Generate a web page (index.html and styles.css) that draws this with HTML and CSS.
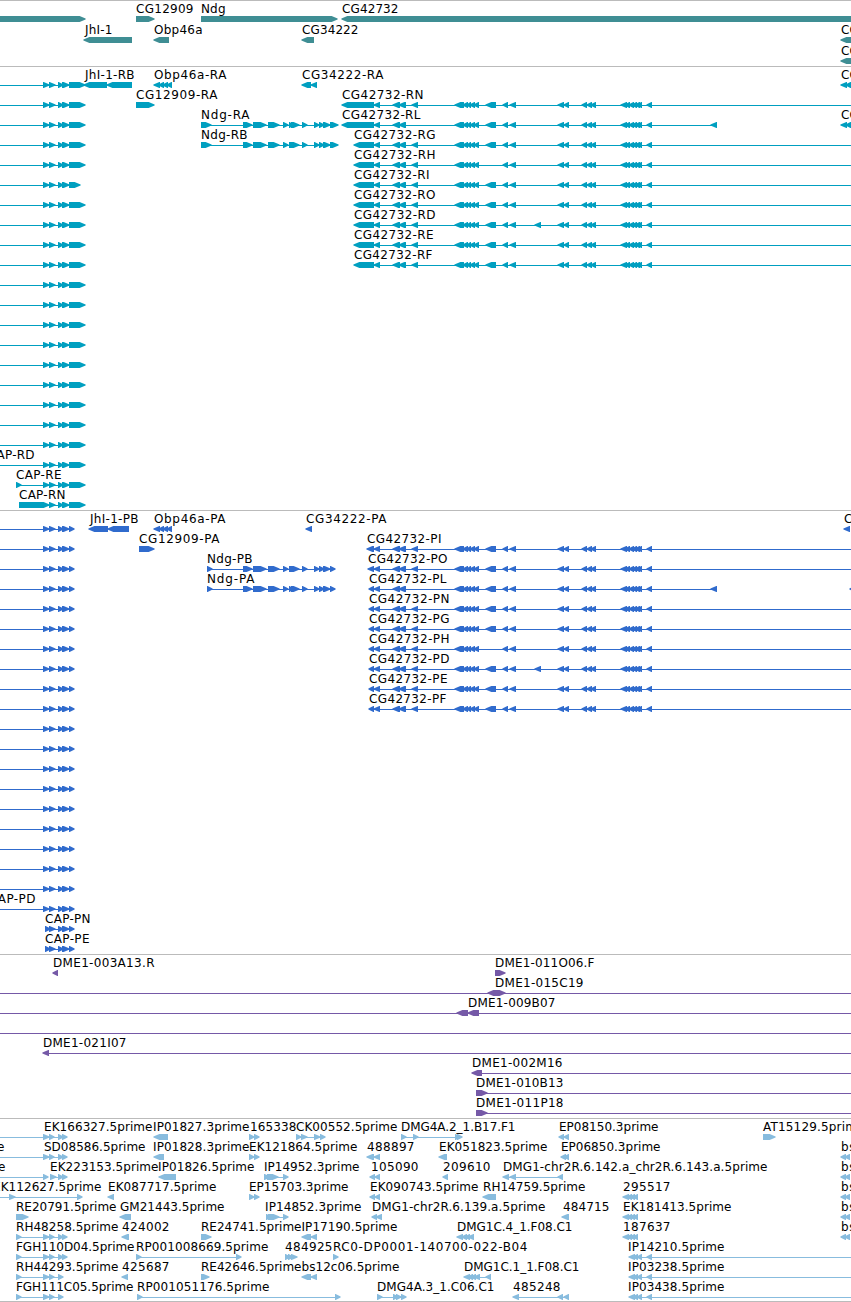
FILE: index.html
```html
<!DOCTYPE html>
<html lang="en">
<head>
<meta charset="utf-8">
<title>Genome tracks</title>
<link rel="stylesheet" href="styles.css">
</head>
<body>
<main class="browser">
<section class="track track-gene"></section>
<section class="track track-transcript"></section>
<section class="track track-protein"></section>
<section class="track track-bac"></section>
<section class="track track-est"></section>
</main>
<script src="tracks.js"></script>
</body>
</html>
```
FILE: styles.css
```css
body {
  margin: 0;
  background: #fff;
  overflow: hidden;
}
.browser {
  display: flex;
  flex-direction: column;
  width: 851px;
  height: 1302px;
  overflow: hidden;
}
.track {
  box-sizing: border-box;
  flex: none;
  border-top: 1px solid #bbb;
  padding-bottom: 3px;
}
.track-gene { color: #3f8e94; height: 66px; }
.track-transcript { color: #009fc0; }
.track-protein { color: #306bcd; }
.track-bac { color: #7559a7; }
.track-est { color: #88bcde; height: 184px; border-bottom: 1px solid #bbb; padding-bottom: 0; }
.row {
  display: block;
  width: 851px;
  height: 20px;
  overflow: visible;
}
.track-gene .row { height: 21px; }
.feature {
  fill: currentColor;
}
.label {
  fill: #000;
  font-family: "DejaVu Sans", sans-serif;
  font-size: 12px;
}
```
FILE: tracks.js
```js
const NS = "http://www.w3.org/2000/svg";

// Feature: [direction, "start-end start-end ...", label, label start, label end, line start, line end]
function add(svg, tag, attrs) {
  const el = document.createElementNS(NS, tag);
  for (const k in attrs) el.setAttribute(k, attrs[k]);
  svg.appendChild(el);
  return el;
}

function arrow(svg, dir, s, e) {
  const w = e - s;
  const h = Math.min(w, 6);
  const tip = 0.6;
  let pts;
  if (dir === "R") {
    pts = [[s, 15], [e - h + 0.6, 15], [e + tip, 17.6], [e + tip, 18.4], [e - h + 0.6, 21], [s, 21]];
  } else {
    pts = [[e, 15], [s + h - 0.6, 15], [s - tip, 17.6], [s - tip, 18.4], [s + h - 0.6, 21], [e, 21]];
  }
  add(svg, "polygon", { class: "feature", points: pts.map(p => p.join(",")).join(" ") });
}

function draw(selector, rows) {
  const track = document.querySelector(selector);
  rows.forEach(row => {
    const svg = document.createElementNS(NS, "svg");
    svg.setAttribute("class", "row");
    row.forEach(([dir, exons, label, lx, le, from, to]) => {
      const parts = exons ? exons.split(" ").map(x => x.split("~").map(Number)) : [];
      if (from !== undefined) {
        add(svg, "rect", { class: "feature", x: from, y: 18, width: to - from, height: 1 });
      }
      parts.forEach(p => arrow(svg, dir, p[0], p[1]));
      if (label) {
        const t = add(svg, "text", { class: "label", x: lx, y: 12 });
        if (le !== undefined && le !== null) t.setAttribute("textLength", le - lx + 0.5);
        t.textContent = label;
      }
    });
    track.appendChild(svg);
  });
}

const N = null;

draw(".track-gene", [
  [["R", "-10~85"], ["R", "136~154", "CG12909", 136, 193], ["R", "201~337", "Ndg", 201, 225], ["L", "342~860", "CG42732", 342, 398]],
  [["L", "84~132", "JhI-1", 85, 112], ["L", "154~169", "Obp46a", 154, 202], ["L", "302~314", "CG34222", 302, 358], ["L", "841~860", "CG", 841]],
  [["L", "841~860", "CG", 841]]
]);

const HEAD = "374~380 393~400 399~406";
const MID = "455~463 459~464 463~468 467~471 470~475 474~479";
const BIG = "486~496";
const TAIL = "503~508 510~516 558~564 564~569 582~587 587~592 591~596 621~627 625~630 629~634 632~637 635~640 637~642 647~652";

function longGene(first, label, lx, le, opt = {}) {
  const ex = [first, HEAD, opt.noFour ? "" : "412~418", MID, opt.noBig ? "" : BIG, opt.extra || "", TAIL, opt.end || ""];
  const start = Number(first.split("~")[0]);
  return ["L", ex.filter(Boolean).join(" "), label, lx, le, start + 3, opt.end ? 717 : 851];
}

const NDG = "243~252 253~266 268~279 283~288";
const NDG_SPLIT = "289~293 291~299";
const NDG_END = "302~307 314~319 319~324 323~330";
const CAP = "43~49 49~55 58~63 62~69";

const transcripts = Array.from({ length: 20 }, (_, i) =>
  [["R", CAP + (i === 5 ? " 69~80" : " 69~85"), N, N, N, 0, 76]]);
transcripts[0].push(
  ["L", "84~107 107~132", "JhI-1-RB", 85, 134],
  ["L", "154~160 159~164 163~168 167~172", "Obp46a-RA", 154, 226],
  ["L", "302~311 311~317", "CG34222-RA", 302, 383],
  ["L", "841~847 846~851", "CG", 841]);
transcripts[1].push(["R", "136~154", "CG12909-RA", 136, 217], longGene("342~374", "CG42732-RN", 342, 423));
transcripts[2].push(
  ["R", `201~211 ${NDG} ${NDG_SPLIT} ${NDG_END} 330~338`, "Ndg-RA", 201, 249, 201, 335],
  longGene("342~374", "CG42732-RL", 342, 420, { noFour: true, end: "711~717" }),
  ["L", "841~847 846~851", "CG", 841]);
transcripts[3].push(
  ["R", `201~211 ${NDG} 289~299 ${NDG_END} 330~338`, "Ndg-RB", 201, 247, 201, 335],
  longGene("354~374", "CG42732-RG", 354, 435));
transcripts[4].push(longGene("354~374", "CG42732-RH", 354, 435, { noBig: true }));
transcripts[5].push(longGene("354~374", "CG42732-RI", 354, 429));
transcripts[6].push(longGene("354~374", "CG42732-RO", 354, 435));
transcripts[7].push(longGene("354~374", "CG42732-RD", 354, 435, { extra: "535~541" }));
transcripts[8].push(longGene("354~374", "CG42732-RE", 354, 433));
transcripts[9].push(longGene("354~374", "CG42732-RF", 354, 432));
transcripts[19].push(["R", "", "CAP-RD", -12, 34]);
transcripts.push([["R", "16~21 " + CAP + " 69~85", "CAP-RE", 16, 61, 16, 76]]);
transcripts.push([["R", "19~49 49~55 58~63 62~69 69~85", "CAP-RN", 19, 65, 40, 76]]);
draw(".track-transcript", transcripts);

const proteins = Array.from({ length: 20 }, () => [["R", CAP + " 69~74", N, N, N, 0, 72]]);
proteins[0].push(
  ["L", "89~108 108~129", "JhI-1-PB", 90, 138],
  ["L", "154~160 159~164 163~168 167~172", "Obp46a-PA", 154, 225],
  ["L", "306~312", "CG34222-PA", 306, 386],
  ["L", "844~850", "C", 844]);
proteins[1].push(["R", "139~154", "CG12909-PA", 139, 219], longGene("367~374", "CG42732-PI", 367, 441));
proteins[2].push(
  ["R", `207~212 ${NDG} 289~299 ${NDG_END} 330~335`, "Ndg-PB", 207, 252, 207, 334],
  longGene("368~374", "CG42732-PO", 368, 447));
proteins[3].push(
  ["R", `207~212 ${NDG} ${NDG_SPLIT} ${NDG_END} 330~335`, "Ndg-PA", 207, 254, 207, 334],
  longGene("369~374", "CG42732-PL", 369, 446, { noFour: true, end: "711~717" }),
  ["L", "850~855"]);
proteins[4].push(longGene("369~374", "CG42732-PN", 369, 449));
proteins[5].push(longGene("369~374", "CG42732-PG", 369, 449));
proteins[6].push(longGene("369~374", "CG42732-PH", 369, 449, { noBig: true }));
proteins[7].push(longGene("369~374", "CG42732-PD", 369, 449, { extra: "535~541" }));
proteins[8].push(longGene("369~374", "CG42732-PE", 369, 447));
proteins[9].push(longGene("369~374", "CG42732-PF", 369, 446));
proteins[19].push(["R", "", "CAP-PD", -11, 35]);
proteins.push([["R", "45~50 49~55 58~63 62~69 69~74", "CAP-PN", 45, 90, 45, 72]]);
proteins.push([["R", "45~50 49~55 58~63 62~69 69~74", "CAP-PE", 45, 89, 45, 72]]);
draw(".track-protein", proteins);

draw(".track-bac", [
  [["L", "53~58", "DME1-003A13.R", 53, 154], ["R", "495~505", "DME1-011O06.F", 495, 594]],
  [["L", "488~497", N, N, N, 0, 851], ["R", "495~505", "DME1-015C19", 495, 583]],
  [["L", "457~468 468~479", "DME1-009B07", 468, 555, 0, 851]],
  [["L", "", N, N, N, 0, 851]],
  [["L", "43~49", "DME1-021I07", 43, 126, 46, 851]],
  [["L", "472~482", "DME1-002M16", 472, 562, 476, 851]],
  [["R", "476~487", "DME1-010B13", 476, 563, 480, 851]],
  [["R", "476~487", "DME1-011P18", 476, 563, 480, 851]]
]);

const FOUR = "43~49 49~54 58~63 62~67";
const THREE = "16~21 43~49 49~54 58~63";
const PAIR = "249~254 254~259";
const CLUSTER = "623~629 627~632 630~635 633~638";
const IP = "629~635 633~638 637~642 647~652";
const BS = ["L", "841~846 845~850", "bs", 841, 855];

draw(".track-est", [
  [["R", FOUR, "EK166327.5prime", 44, 152, 0, 65], ["L", "154~168", "IP01827.3prime", 153, 249],
   ["R", PAIR, "165338", 250, 296], ["R", "296~301 301~307 314~320 320~325", "CK00552.5prime", 296, 397, 296, 322],
   ["R", "401~406 413~418 455~460 457~462", "DMG4A.2_1.B17.F1", 401, 515, 401, 459],
   ["L", "559~564 564~569", "EP08150.3prime", 559, 658], ["R", "763~775", "AT15129.5prime", 763, 864]],
  [["R", FOUR, "prime", -28, 4, 0, 65], ["R", "", "SD08586.5prime", 44, 145], ["L", "154~164", "IP01828.3prime", 153, 249],
   ["R", PAIR, "EK121864.5prime", 249, 357], ["L", "367~374 374~380", "488897", 367, 414],
   ["L", "439~447", "EK051823.5prime", 439, 547], ["L", "561~566 564~569", "EP06850.3prime", 561, 660], BS],
  [["R", "43~48", "prime", -27, 5, 0, 46], ["R", "50~56 58~63 62~67", "EK223153.5prime", 50, 158, 50, 65],
   ["L", "159~176", "IP01826.5prime", 158, 254], ["R", "264~270 267~278 283~288", "IP14952.3prime", 264, 359, 264, 286],
   ["L", "370~375 375~380", "105090", 371, 418], ["L", "443~448", "209610", 443, 490],
   ["L", "503~509 510~516 558~563", "DMG1-chr2R.6.142.a_chr2R.6.143.a.5prime", 503, 767, 505, 560], BS],
  [["R", "9~15 77~82", "EK112627.5prime", -7, 101, 0, 80], ["L", "108~114", "EK087717.5prime", 108, 216],
   ["R", PAIR, "EP15703.3prime", 249, 348], ["L", "370~375 375~380", "EK090743.5prime", 370, 478],
   ["L", "483~496", "RH14759.5prime", 483, 585], ["L", CLUSTER, "295517", 623, 670], BS],
  [["R", "16~28", "RE20791.5prime", 16, 116], ["L", "120~131", "GM21443.5prime", 120, 224],
   ["R", "266~271 268~279 283~288", "IP14852.3prime", 265, 361, 266, 286],
   ["L", "372~377 376~382", "DMG1-chr2R.6.139.a.5prime", 372, 545], ["L", "562~569", "484715", 563, 609],
   ["L", CLUSTER, "EK181413.5prime", 623, 731], BS],
  [["R", "16~21 " + FOUR, "RH48258.5prime", 16, 118, 16, 65], ["L", "122~129", "424002", 122, 169],
   ["R", "201~211", "RE24741.5prime", 201, 301], ["L", "302~311 311~317", "IP17190.5prime", 301.5, 397],
   ["L", "457~463 462~467 465~470 468~474", "DMG1C.4_1.F08.C1", 457, 572], ["L", CLUSTER, "187637", 623, 670], BS],
  [["R", "16~21 " + FOUR, "FGH110D04.5prime", 16, 134, 16, 65], ["R", "136~141 236~241", "RP001008669.5prime", 136, 268, 136, 239],
   ["R", "285~290 288~293 291~297", "484925", 285, 332], ["R", "333~338", "RC0-DP0001-140700-022-B04", 333, 527],
   ["L", IP, "IP14210.5prime", 628, 724, 631, 851]],
  [["R", THREE, "RH44293.5prime", 16, 118, 16, 61], ["L", "122~128", "425687", 122, 169],
   ["R", "201~209", "RE42646.5prime", 201, 301], ["L", "302~311 311~317", "bs12c06.5prime", 301.5, 399],
   ["L", "464~470 468~473 471~476 474~480 486~491", "DMG1C.1_1.F08.C1", 464, 579, 466, 489],
   ["L", IP, "IP03238.5prime", 628, 724, 631, 851]],
  [["R", THREE, "FGH111C05.5prime", 16, 133, 16, 61], ["R", "137~142 335~340", "RP001051176.5prime", 137, 269, 137, 338],
   ["R", "377~382 393~398 396~401 401~406", "DMG4A.3_1.C06.C1", 377, 494, 377, 404],
   ["L", "513~519 558~563 564~569", "485248", 513, 560, 516, 566],
   ["L", IP, "IP03438.5prime", 628, 724, 631, 851]]
]);
```
